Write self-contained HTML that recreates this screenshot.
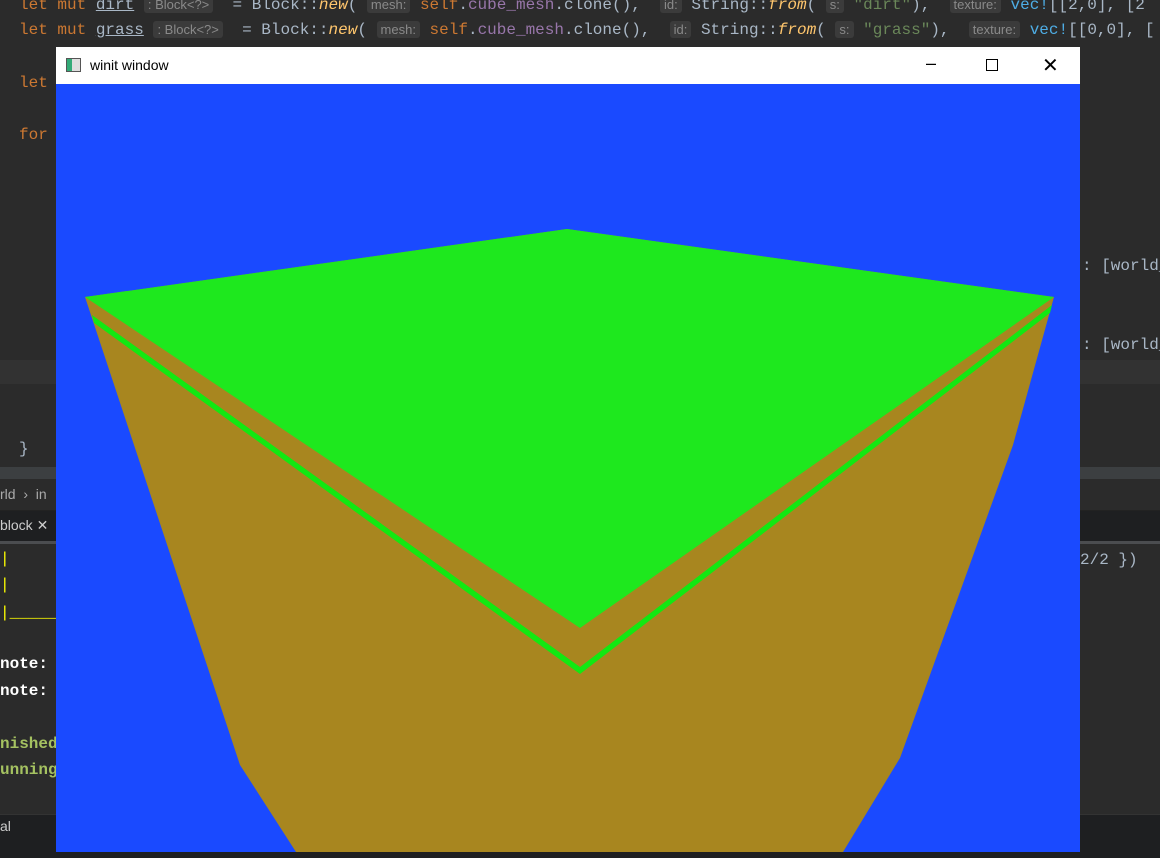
<!DOCTYPE html>
<html><head><style>
body{margin:0;width:1160px;height:857px;background:#2b2b2b;position:relative;overflow:hidden;font-family:"Liberation Mono","DejaVu Sans Mono",monospace;font-size:16px;color:#a9b7c6}
.l{position:absolute;white-space:pre;left:19px}
.k{color:#cc7832}.f{color:#ffc66d;font-style:italic}.s{color:#6a8759}.p{color:#9876aa}
.h{background:#3b3b3b;color:#8a8a8a;font-family:"Liberation Sans",sans-serif;font-size:13px;padding:1px 4px;border-radius:3px}
.m{color:#4eade5}
.w{position:absolute;left:56px;top:47px;width:1024px;height:805px;background:#1a4aff}
.t{position:absolute;left:0;top:0;width:1024px;height:37px;background:#fff;font-family:"Liberation Sans",sans-serif;font-size:14px;color:#000}
</style></head><body>
<div style="position:absolute;left:0;top:360px;width:1160px;height:24px;background:#323232"></div>
<div style="position:absolute;left:0;top:467px;width:1160px;height:12px;background:#3c3f41"></div>
<div style="position:absolute;left:0;top:480px;width:1160px;height:30px;background:#2b2b2b;border-bottom:1px solid #222"></div>
<div style="position:absolute;left:0;top:511px;width:1160px;height:30px;background:#1e1f21;border-bottom:3px solid #4b4d50"></div>
<div style="position:absolute;left:0;top:544px;width:1160px;height:270px;background:#2b2b2b"></div>
<div style="position:absolute;left:0;top:814px;width:1160px;height:43px;background:#1e1f21;border-top:1px solid #333"></div>
<div class="l" style="top:-4px"><span class="k">let mut</span> <u>dirt</u> <span class="h">: Block&lt;?&gt;</span>  = Block::<span class="f">new</span>( <span class="h">mesh:</span> <span class="k">self</span>.<span class="p">cube_mesh</span>.clone(),  <span class="h">id:</span> String::<span class="f">from</span>( <span class="h">s:</span> <span class="s">"dirt"</span>),  <span class="h">texture:</span> <span class="m">vec!</span>[[2,0], [2</div>
<div class="l" style="top:21px"><span class="k">let mut</span> <u>grass</u> <span class="h">: Block&lt;?&gt;</span>  = Block::<span class="f">new</span>( <span class="h">mesh:</span> <span class="k">self</span>.<span class="p">cube_mesh</span>.clone(),  <span class="h">id:</span> String::<span class="f">from</span>( <span class="h">s:</span> <span class="s">"grass"</span>),  <span class="h">texture:</span> <span class="m">vec!</span>[[0,0], [</div>
<div class="l k" style="top:74px">let</div>
<div class="l k" style="top:126px">for</div>
<div class="l" style="top:440px">}</div>
<div class="l" style="top:257px;left:1082px">: [world_</div>
<div class="l" style="top:336px;left:1082px">: [world_</div>
<div class="l" style="top:551px;left:1080px">2/2 })</div>
<div class="l" style="left:0;top:486px;font-family:'Liberation Sans';font-size:14px;color:#aaa">rld  ›  in</div>
<div class="l" style="left:0;top:517px;font-family:'Liberation Sans';font-size:14px;color:#ccc">block ✕</div>
<div class="l" style="left:0;top:550px;color:#ff0">|</div>
<div class="l" style="left:0;top:576px;color:#ff0">|</div>
<div class="l" style="left:0;top:604px;color:#ff0">|_____</div>
<div class="l" style="left:0;top:655px;color:#fff;font-weight:bold">note:</div>
<div class="l" style="left:0;top:682px;color:#fff;font-weight:bold">note:</div>
<div class="l" style="left:0;top:735px;color:#a5c261;font-weight:bold">nished</div>
<div class="l" style="left:0;top:761px;color:#a5c261;font-weight:bold">unning</div>
<div class="l" style="left:0;top:818px;font-family:'Liberation Sans';font-size:14px;color:#ccc">al</div>
<div class="w">
<div class="t"><div style="position:absolute;left:10px;top:11px;width:13px;height:12px;border:1px solid #555;background:linear-gradient(90deg,#3a7 40%,#ddd 40%)"></div><span style="position:absolute;left:34px;top:10px">winit window</span>
<span style="position:absolute;left:870px;top:6px;font-size:18px">–</span>
<div style="position:absolute;left:930px;top:12px;width:10px;height:10px;border:1px solid #000"></div>
<span style="position:absolute;left:986px;top:6px;font-size:20px">✕</span></div>
<svg width="1024" height="805" style="position:absolute;left:0;top:0">
<polygon points="29,250 511,182 998,250 957,398 844,711 787,805 240,805 184,718" fill="#a8861f"/>
<polygon points="36,268 524,620 996,258 994,266 524,627 38,276" fill="#12e812"/>
<polygon points="29,250 511,182 998,250 524,581" fill="#1ee81e"/>
</svg>
</div>
</body></html>
